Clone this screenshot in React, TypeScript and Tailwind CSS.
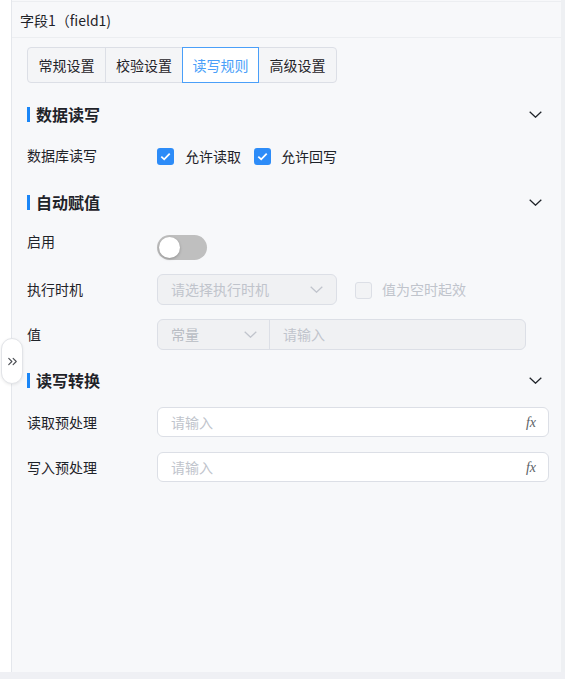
import { useState } from 'react';
import { ChevronsRight } from 'lucide-react';

const font = { fontFamily: '"Noto Sans CJK SC", "Noto Sans", sans-serif' };

const tabs = ['常规设置', '校验设置', '读写规则', '高级设置'];

// thin chevron used by section headers and selects
const Chevron = ({ className }: { className?: string }) => (
  <svg width="13" height="7" viewBox="0 0 13 7" fill="none" className={className}>
    <path d="M0.7 0.7L6.5 6.2L12.3 0.7" stroke="currentColor" strokeWidth="1.3" />
  </svg>
);

const SectionTitle = ({ title, className }: { title: string; className?: string }) => (
  <div className={`flex h-[24px] items-center justify-between pr-[7px] ${className ?? ''}`}>
    <div className="flex items-center">
      <span className="h-[15px] w-[3px] bg-[#1a86f7]" />
      <span className="ml-[6px] text-[16px] font-bold text-[#1f2329]">{title}</span>
    </div>
    <Chevron className="text-[#1f2329]" />
  </div>
);

const Checkbox = ({ checked, disabled }: { checked?: boolean; disabled?: boolean }) =>
  checked ? (
    <span className="flex h-[17px] w-[17px] shrink-0 items-center justify-center rounded-[3px] bg-[#2d8cf8]">
      <svg width="11" height="9" viewBox="0 0 11 9" fill="none">
        <path d="M1.3 4.6L4.2 7.3L9.7 1.6" stroke="white" strokeWidth="1.8" />
      </svg>
    </span>
  ) : (
    <span
      className={`block h-[17px] w-[17px] shrink-0 rounded-[3px] border border-[#dcdfe6] ${
        disabled ? 'bg-[#f2f3f5]' : 'bg-white'
      }`}
    />
  );

const FxInput = () => (
  <div className="flex h-[30px] flex-1 items-center justify-between rounded-[6px] border border-[#dcdfe6] bg-white pl-[13px] pr-[12px]">
    <span className="text-[14px] text-[#c0c4cc]">请输入</span>
    <span className="text-[14px] italic text-[#5b5f66]" style={{ fontFamily: '"Liberation Serif", serif' }}>
      fx
    </span>
  </div>
);

export default function App() {
  const [active, setActive] = useState(2);
  const [enabled, setEnabled] = useState(false);

  return (
    <div className="flex h-[679px] w-[565px] flex-col bg-white" style={font}>
      <div className="relative flex flex-1">
        <div className="w-[11px] bg-white" />
        <div className="flex flex-1 flex-col border-l border-[#e4e7ec] bg-[#f7f8fa]">
          {/* header */}
          <div className="mt-px flex h-[37px] items-center border-t border-b border-[#eceef1] pl-[8px] pt-[2px] text-[14px] text-[#1f2329]">
            字段1（field1)
          </div>

          <div className="flex flex-col pl-[15px] pr-[12px]">
            {/* tabs */}
            <div className="mt-[9px] flex h-[36px] self-start rounded-[4px] border border-[#dcdfe6] bg-[#f4f5f7]">
              {tabs.map((t, i) => (
                <button
                  key={t}
                  onClick={() => setActive(i)}
                  className={`-my-px flex w-[77px] items-center justify-center text-[14px] ${
                    i === active
                      ? 'border border-[#4a9ff9] bg-white text-[#4a9ff9]'
                      : `text-[#1f2329] ${i > 0 && i !== active + 1 ? 'border-l border-[#dcdfe6]' : ''}`
                  }`}
                >
                  {t}
                </button>
              ))}
            </div>

            <SectionTitle title="数据读写" className="mt-[19px]" />

            <div className="mt-[14px] flex h-[30px] items-center text-[14px] text-[#1f2329]">
              <span className="w-[130px]">数据库读写</span>
              <div className="flex items-center pt-[2px]">
                <Checkbox checked />
                <span className="ml-[11px]">允许读取</span>
                <span className="ml-[13px]">
                  <Checkbox checked />
                </span>
                <span className="ml-[10px]">允许回写</span>
              </div>
            </div>

            <SectionTitle title="自动赋值" className="mt-[20px]" />

            <div className="mt-[12px] flex items-start text-[14px] text-[#1f2329]">
              <span className="w-[130px] leading-[30px]">启用</span>
              <button
                onClick={() => setEnabled(!enabled)}
                className={`mt-[9px] flex h-[25px] w-[50px] items-center rounded-full px-[2px] ${
                  enabled ? 'justify-end bg-[#2d8cf8]' : 'bg-[#bfbfbf]'
                }`}
              >
                <span className="h-[21px] w-[21px] rounded-full bg-white shadow-[0_1px_3px_rgba(0,0,0,0.25)]" />
              </button>
            </div>

            <div className="mt-[14px] flex items-center text-[14px] text-[#1f2329]">
              <span className="w-[130px] leading-[31px]">执行时机</span>
              <div className="flex h-[31px] w-[180px] items-center justify-between rounded-[6px] border border-[#dcdfe6] bg-[#f0f1f3] pl-[13px] pr-[13px]">
                <span className="text-[#c0c4cc]">请选择执行时机</span>
                <Chevron className="text-[#c0c4cc]" />
              </div>
              <span className="ml-[18px] pt-[2px]">
                <Checkbox disabled />
              </span>
              <span className="ml-[10px] text-[#c0c4cc]">值为空时起效</span>
            </div>

            <div className="mt-[14px] flex items-center text-[14px] text-[#1f2329]">
              <span className="w-[130px] leading-[31px]">值</span>
              <div className="flex h-[31px] w-[369px] items-center rounded-[6px] border border-[#dcdfe6] bg-[#f0f1f3]">
                <div className="flex h-full w-[112px] items-center justify-between border-r border-[#dcdfe6] pl-[13px] pr-[12px]">
                  <span className="text-[#b8bcc3]">常量</span>
                  <Chevron className="text-[#c0c4cc]" />
                </div>
                <span className="pl-[13px] text-[#c0c4cc]">请输入</span>
              </div>
            </div>

            <SectionTitle title="读写转换" className="mt-[18px]" />

            <div className="mt-[15px] flex items-center text-[14px] text-[#1f2329]">
              <span className="w-[130px] leading-[30px]">读取预处理</span>
              <FxInput />
            </div>

            <div className="mt-[15px] flex items-center text-[14px] text-[#1f2329]">
              <span className="w-[130px] leading-[30px]">写入预处理</span>
              <FxInput />
            </div>
          </div>
        </div>
        <div className="w-[4px] bg-[#eef0f3]" />

        {/* collapse handle on the panel edge */}
        <button className="absolute left-px top-[338px] flex h-[46px] w-[22px] items-center justify-center rounded-full border border-[#e2e4e8] bg-white shadow-[0_1px_3px_rgba(0,0,0,0.08)]">
          <ChevronsRight size={15} strokeWidth={1.8} className="text-[#4a4d52]" />
        </button>
      </div>
      <div className="h-[7px] bg-[#eff0f4]" />
    </div>
  );
}
